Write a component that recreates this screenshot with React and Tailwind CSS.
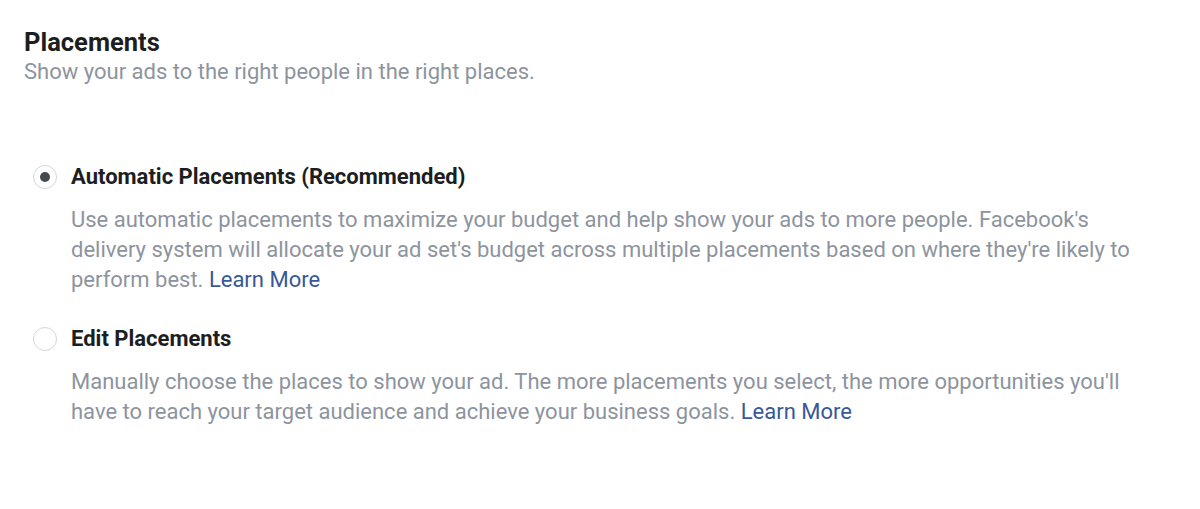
import React from 'react';

const options = [
  {
    id: 'auto',
    label: 'Automatic Placements (Recommended)',
    description:
      "Use automatic placements to maximize your budget and help show your ads to more people. Facebook's delivery system will allocate your ad set's budget across multiple placements based on where they're likely to perform best.",
    checked: true,
  },
  {
    id: 'edit',
    label: 'Edit Placements',
    description:
      "Manually choose the places to show your ad. The more placements you select, the more opportunities you'll have to reach your target audience and achieve your business goals.",
    checked: false,
  },
];

const Radio = ({ checked }) => (
  <span className="flex h-6 w-6 shrink-0 items-center justify-center rounded-full border-[1.5px] border-[#d4d6da] bg-white">
    {checked && <span className="h-[10px] w-[10px] rounded-full bg-[#444950]" />}
  </span>
);

const App = () => {
  return (
    <div className="min-h-[509px] w-[1200px] bg-white px-6 pt-[26px] font-['Roboto',sans-serif] antialiased">
      {/* Header */}
      <h2 className="text-[25.5px] font-bold leading-[32px] text-[#1c1e21]">Placements</h2>
      <p className="-mt-[1px] text-[22px] leading-[30px] text-[#8d949e]">
        Show your ads to the right people in the right places.
      </p>

      {/* Options */}
      <div className="mt-[74px] flex flex-col gap-[28px] pl-[9px]">
        {options.map((opt) => (
          <div key={opt.id} className="flex gap-[14px]">
            <div className="pt-[4px]">
              <Radio checked={opt.checked} />
            </div>
            <div className="w-[1090px]">
              <div className="text-[22px] font-bold leading-[32px] text-[#1c1e21]">{opt.label}</div>
              <p className="mt-[12px] text-[22px] leading-[30px] text-[#8d949e]">
                {opt.description}{' '}
                <a href="#" className="text-[#385898]">
                  Learn More
                </a>
              </p>
            </div>
          </div>
        ))}
      </div>
    </div>
  );
};

export default App;
